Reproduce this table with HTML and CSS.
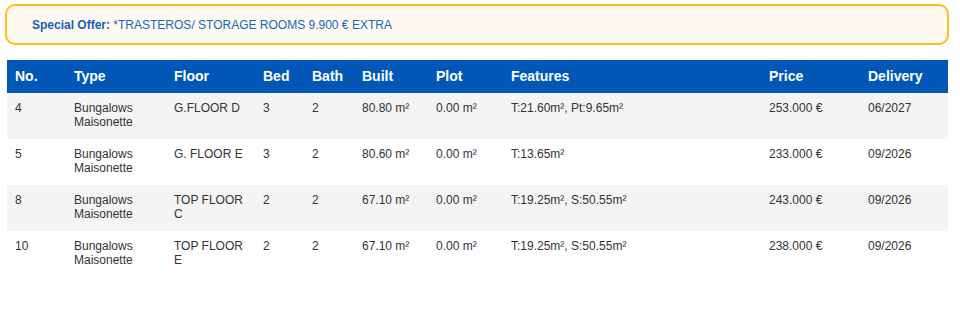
FILE: index.html
```html
<!DOCTYPE html>
<html>
<head>
<meta charset="utf-8">
<link rel="stylesheet" href="styles.css">
</head>
<body>
<div class="offer"><strong>Special Offer:</strong> *TRASTEROS/ STORAGE ROOMS 9.900 € EXTRA</div>
<table class="units">
<colgroup>
<col class="c-no"><col class="c-type"><col class="c-floor"><col class="c-bed"><col class="c-bath"><col class="c-built"><col class="c-plot"><col class="c-feat"><col class="c-price"><col class="c-del">
</colgroup>
<thead>
<tr><th>No.</th><th>Type</th><th>Floor</th><th>Bed</th><th>Bath</th><th>Built</th><th>Plot</th><th>Features</th><th>Price</th><th>Delivery</th></tr>
</thead>
<tbody>
<tr><td>4</td><td>Bungalows Maisonette</td><td>G.FLOOR D</td><td>3</td><td>2</td><td>80.80 m²</td><td>0.00 m²</td><td>T:21.60m², Pt:9.65m²</td><td>253.000 €</td><td>06/2027</td></tr>
<tr><td>5</td><td>Bungalows Maisonette</td><td>G. FLOOR E</td><td>3</td><td>2</td><td>80.60 m²</td><td>0.00 m²</td><td>T:13.65m²</td><td>233.000 €</td><td>09/2026</td></tr>
<tr><td>8</td><td>Bungalows Maisonette</td><td>TOP FLOOR C</td><td>2</td><td>2</td><td>67.10 m²</td><td>0.00 m²</td><td>T:19.25m², S:50.55m²</td><td>243.000 €</td><td>09/2026</td></tr>
<tr><td>10</td><td>Bungalows Maisonette</td><td>TOP FLOOR E</td><td>2</td><td>2</td><td>67.10 m²</td><td>0.00 m²</td><td>T:19.25m², S:50.55m²</td><td>238.000 €</td><td>09/2026</td></tr>
</tbody>
</table>
</body>
</html>
```
FILE: styles.css
```css
html, body {
  margin: 0;
  padding: 0;
  background: #ffffff;
  font-family: "Liberation Sans", Arial, sans-serif;
}
.offer {
  box-sizing: border-box;
  width: 944px;
  margin: 4px 0 0 5px;
  padding: 12px 25px 11px;
  border: 2px solid #fbbf1a;
  border-radius: 10px;
  background: #fffaf0;
  color: #1667c2;
  font-size: 12px;
  line-height: 14px;
}
.offer strong {
  color: #1660bb;
}
.units {
  width: 941px;
  margin: 15px 0 0 7px;
  border-collapse: collapse;
  table-layout: fixed;
}
.c-no { width: 59px; }
.c-type { width: 100px; }
.c-floor { width: 89px; }
.c-bed { width: 49px; }
.c-bath { width: 50px; }
.c-built { width: 74px; }
.c-plot { width: 75px; }
.c-feat { width: 258px; }
.c-price { width: 99px; }
.c-del { width: 88px; }
.units th {
  background: #0057b5;
  color: #ffffff;
  font-size: 14px;
  font-weight: bold;
  text-align: left;
  height: 33px;
  padding: 0 8px 2px;
  box-sizing: border-box;
  line-height: 16px;
}
.units td {
  font-size: 12px;
  line-height: 14px;
  color: #333333;
  padding: 8px 8px 10px;
  vertical-align: top;
  height: 28px;
}
.units tbody tr:nth-child(odd) td {
  background: #f4f4f4;
}
```
